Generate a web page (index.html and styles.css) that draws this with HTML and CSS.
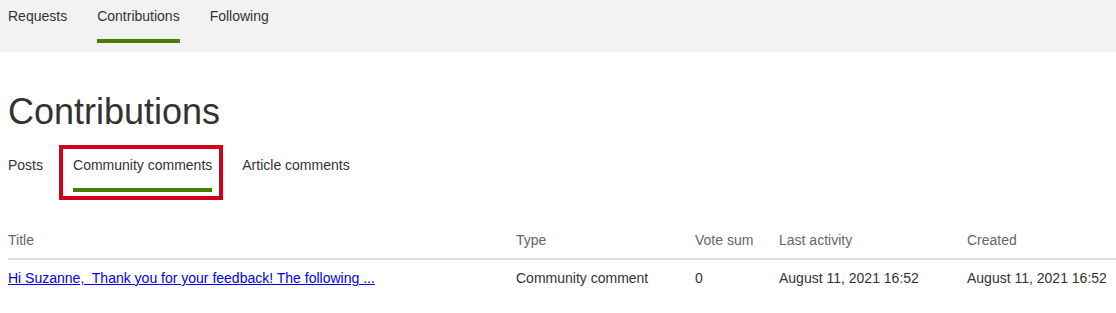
FILE: index.html
```html
<!DOCTYPE html>
<html lang="en">
<head>
<meta charset="utf-8">
<title>Contributions</title>
<link rel="stylesheet" href="styles.css">
</head>
<body>
<nav class="topnav">
  <a class="topnav-item" href="#">Requests</a>
  <a class="topnav-item is-active" href="#">Contributions</a>
  <a class="topnav-item" href="#">Following</a>
</nav>
<main class="page">
  <h1 class="page-title">Contributions</h1>
  <nav class="subtabs">
    <a class="subtab" href="#">Posts</a>
    <a class="subtab is-active" href="#">Community comments<span class="highlight-box"></span></a>
    <a class="subtab" href="#">Article comments</a>
  </nav>
  <table class="contrib-table">
    <colgroup>
      <col class="col-title">
      <col class="col-type">
      <col class="col-vote">
      <col class="col-last">
      <col class="col-created">
    </colgroup>
    <thead>
      <tr>
        <th>Title</th>
        <th>Type</th>
        <th>Vote sum</th>
        <th>Last activity</th>
        <th>Created</th>
      </tr>
    </thead>
    <tbody>
      <tr>
        <td><a class="title-link" href="#">Hi Suzanne,&nbsp; Thank you for your feedback! The following ...</a></td>
        <td>Community comment</td>
        <td>0</td>
        <td>August 11, 2021 16:52</td>
        <td>August 11, 2021 16:52</td>
      </tr>
    </tbody>
  </table>
</main>
</body>
</html>
```

FILE: styles.css
```css
* { box-sizing: border-box; }

body {
  margin: 0;
  font-family: "Liberation Sans", Arial, sans-serif;
  color: #333;
  background: #fff;
}

.topnav {
  display: flex;
  gap: 30px;
  height: 52px;
  background: #f2f2f2;
  padding-left: 8px;
}

.topnav-item {
  font-size: 14px;
  line-height: 17px;
  color: #333;
  text-decoration: none;
  padding-top: 8px;
  padding-bottom: 14px;
  border-bottom: 4px solid transparent;
  height: 43px;
}

.topnav-item.is-active {
  border-bottom-color: #478000;
}

.page {
  padding-left: 8px;
}

.page-title {
  margin: 39px 0 0;
  font-size: 36px;
  line-height: 41px;
  font-weight: 400;
  color: #333;
}

.subtabs {
  display: flex;
  gap: 30px;
  margin-top: 25px;
}

.subtab {
  position: relative;
  font-size: 14px;
  line-height: 17px;
  color: #333;
  text-decoration: none;
  padding-bottom: 14px;
  border-bottom: 4px solid transparent;
}

.subtab.is-active {
  border-bottom-color: #478000;
}

.highlight-box {
  position: absolute;
  left: -14px;
  right: -11px;
  top: -12px;
  bottom: -12px;
  border: 4px solid #d0021b;
  pointer-events: none;
}

.contrib-table {
  margin-top: 30px;
  width: 1108px;
  border-collapse: collapse;
  table-layout: fixed;
  font-size: 14px;
  line-height: 17px;
}

.col-title { width: 508px; }
.col-type { width: 179px; }
.col-vote { width: 84px; }
.col-last { width: 188px; }
.col-created { width: 149px; }

.contrib-table th {
  text-align: left;
  font-weight: 400;
  color: #666;
  padding: 10px 0 9px;
  border-bottom: 2px solid #ddd;
  white-space: nowrap;
}

.contrib-table td {
  padding: 10px 0;
  color: #333;
  white-space: nowrap;
}

.title-link {
  color: #0000ee;
  text-decoration: underline;
}
```
